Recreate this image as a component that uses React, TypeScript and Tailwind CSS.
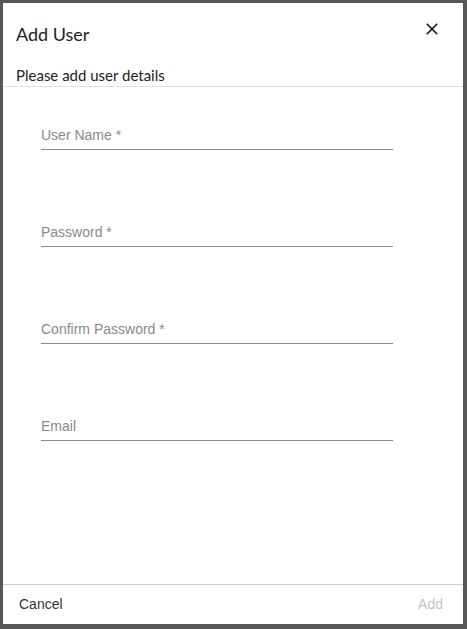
const fields = ["User Name *", "Password *", "Confirm Password *", "Email"];

function CloseIcon() {
  return (
    <svg viewBox="0 0 24 24" className="w-[20px] h-[20px] fill-[#1f1f1f]">
      <path d="M19 6.41L17.59 5 12 10.59 6.41 5 5 6.41 10.59 12 5 17.59 6.41 19 12 13.41 17.59 19 19 17.59 13.41 12z" />
    </svg>
  );
}

export default function App() {
  return (
    <div className="w-[467px] h-[629px] bg-[#575757] pt-[3px] pl-[3px]">
      <div className="w-[460px] h-[621px] bg-white flex flex-col">
        <div className="h-[84px] border-b border-[#e2e2e2] px-[13px] font-['Lato',sans-serif] text-[#222]">
          <div className="flex items-start justify-between pt-[19px]">
            <h2 className="text-[18px] leading-[24px]">Add User</h2>
            <button className="mt-[-3px] mr-[8px]">
              <CloseIcon />
            </button>
          </div>
          <p className="mt-[20px] text-[15px] leading-[18px]">Please add user details</p>
        </div>

        <div className="flex-1 pl-[38px] pt-[40px] font-['Liberation_Sans',Arial,sans-serif]">
          {fields.map((f, i) => (
            <div
              key={f}
              className={`w-[352px] border-b border-[#8c8c8c] pb-[6px] ${i > 0 ? "mt-[74px]" : ""}`}
            >
              <span className="block text-[14px] leading-[16px] text-[#8a8a8a]">{f}</span>
            </div>
          ))}
        </div>

        <div className="h-[40px] border-t border-[#cfcfcf] flex items-center justify-between pl-[16px] pr-[20px] font-['Liberation_Sans',Arial,sans-serif] text-[14px]">
          <button className="text-[#333]">Cancel</button>
          <button className="text-[#c4c4c4]">Add</button>
        </div>
      </div>
    </div>
  );
}
